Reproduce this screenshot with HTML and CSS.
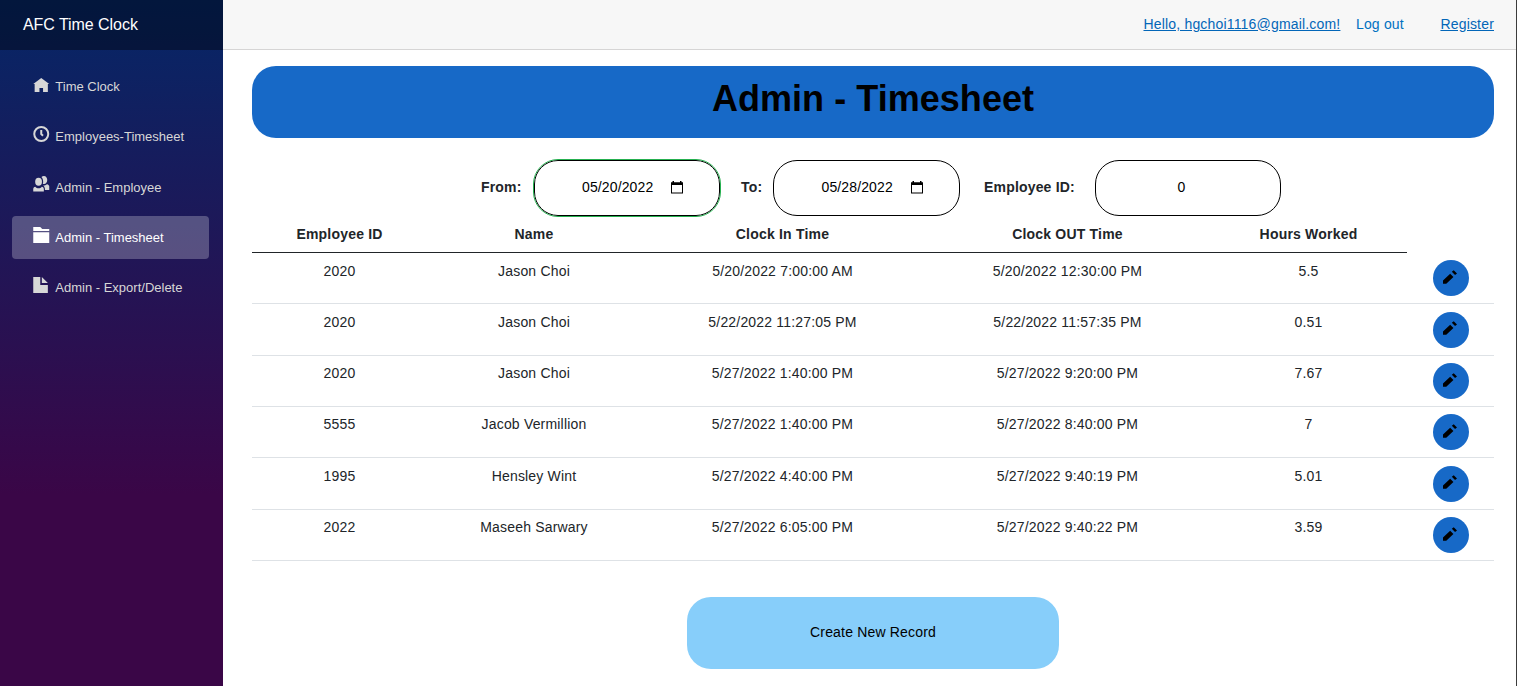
FILE: index.html
```html
<!DOCTYPE html>
<html lang="en">
<head>
<meta charset="utf-8">
<title>AFC Time Clock</title>
<link rel="stylesheet" href="styles.css">
</head>
<body>
<svg class="defs" width="0" height="0">
  <symbol id="pencil" viewBox="0 0 43 42"><path d="M0 32v10h10l22-21-10-10zM27 5l6-5 10 10-6 5z"/></symbol>
  <symbol id="calendar" viewBox="0 0 12 13"><path fill-rule="evenodd" d="M1.500 0h1.500v1.200h6V0h1.500v1.200H12V12.500H0V1.200h1.500zM1 4v7.500h10V4z"/></symbol>
</svg>
<div class="page">
  <aside class="sidebar">
    <div class="brand">AFC Time Clock</div>
    <nav class="menu">
      <a class="item"><svg class="oi home" viewBox="0 0 8 8"><path d="M4 0L0 3h.7v4h2.400V5h1.800v2h2.400V3H8z"/></svg><span>Time Clock</span></a>
      <a class="item"><svg class="oi" viewBox="0 0 8 8"><path fill-rule="evenodd" d="M4 0a4 4 0 1 0 0 8 4 4 0 0 0 0-8zm0 1a3 3 0 1 1 0 6 3 3 0 0 1 0-6zm-.5 1v2.220l.16.130.5.500.34.380.72-.72-.38-.34-.34-.34V2z"/></svg><span>Employees-Timesheet</span></a>
      <a class="item"><svg class="oi people" viewBox="0 0 16 16"><ellipse cx="5.300" cy="5.800" rx="3.400" ry="4"/><path d="M0 15.500V13c0-1.200.8-2 2-2.300 1 1 2 1.500 3.300 1.500s2.400-.5 3.300-1.500c1.200.3 2 1.100 2 2.300v2.500zM8.200 1c.7-.7 1.500-1 2.500-1 2 0 3.300 1.800 3.300 4s-1.300 4.100-3.200 4.100c-.5 0-.9-.1-1.300-.3.300-.6.400-1.300.4-2.100 0-2-.6-3.600-1.700-4.700zM11.700 13.500c0-1.900-.6-3-1.700-4.100 1.500 0 2.700-.3 3.700-1.200 1.500.4 2.300 1.200 2.300 2.400v3.400h-4.300z"/></svg><span>Admin - Employee</span></a>
      <a class="item active"><svg class="oi" viewBox="0 0 8 8"><path d="M0 0v2h8V1H4.500L3.500 0zm0 2.600V8h8V2.600z"/></svg><span>Admin - Timesheet</span></a>
      <a class="item"><svg class="oi" viewBox="0 0 8 8"><path d="M0 0v8h7.300V4H3.500V0zm4.300 0v3h3z"/></svg><span>Admin - Export/Delete</span></a>
    </nav>
  </aside>
  <main class="main">
    <header class="topbar"><a class="link">Hello, hgchoi1116@gmail.com!</a><button class="logout">Log out</button><a class="link">Register</a></header>
    <section class="content">
      <h1 class="title">Admin - Timesheet</h1>
      <div class="filters">
        <label class="from">From:</label><div class="field focus">05/20/2022<svg class="cal"><use href="#calendar"/></svg></div>
        <label class="to">To:</label><div class="field">05/28/2022<svg class="cal"><use href="#calendar"/></svg></div>
        <label class="emp">Employee ID:</label><div class="field number">0</div>
      </div>
      <div class="row head"><span>Employee ID</span><span>Name</span><span>Clock In Time</span><span>Clock OUT Time</span><span>Hours Worked</span></div>
      <div class="rows">
        <div class="row"><span>2020</span><span>Jason Choi</span><span>5/20/2022 7:00:00 AM</span><span>5/20/2022 12:30:00 PM</span><span>5.5</span><button class="edit"><svg><use href="#pencil"/></svg></button></div>
        <div class="row"><span>2020</span><span>Jason Choi</span><span>5/22/2022 11:27:05 PM</span><span>5/22/2022 11:57:35 PM</span><span>0.51</span><button class="edit"><svg><use href="#pencil"/></svg></button></div>
        <div class="row"><span>2020</span><span>Jason Choi</span><span>5/27/2022 1:40:00 PM</span><span>5/27/2022 9:20:00 PM</span><span>7.67</span><button class="edit"><svg><use href="#pencil"/></svg></button></div>
        <div class="row"><span>5555</span><span>Jacob Vermillion</span><span>5/27/2022 1:40:00 PM</span><span>5/27/2022 8:40:00 PM</span><span>7</span><button class="edit"><svg><use href="#pencil"/></svg></button></div>
        <div class="row"><span>1995</span><span>Hensley Wint</span><span>5/27/2022 4:40:00 PM</span><span>5/27/2022 9:40:19 PM</span><span>5.01</span><button class="edit"><svg><use href="#pencil"/></svg></button></div>
        <div class="row"><span>2022</span><span>Maseeh Sarwary</span><span>5/27/2022 6:05:00 PM</span><span>5/27/2022 9:40:22 PM</span><span>3.59</span><button class="edit"><svg><use href="#pencil"/></svg></button></div>
      </div>
      <button class="create">Create New Record</button>
    </section>
  </main>
</div>
</body>
</html>
```
FILE: styles.css
```css
* { box-sizing: border-box; }
body { margin: 0; font: 14px/20px "Liberation Sans", Arial, sans-serif; letter-spacing: .18px; color: #212529; overflow: hidden; }
button { font: inherit; letter-spacing: inherit; border: 0; padding: 0; background: none; }
.defs { position: absolute; }
.page { display: flex; height: 686px; }
.sidebar { width: 223px; background: linear-gradient(180deg, #052767 0%, #3a0647 72%); letter-spacing: 0; }
.brand { height: 50px; padding: 0 23px; background: rgba(0,0,0,.4); color: #fff; font-size: 16px; line-height: 49px; letter-spacing: -.05px; }
.menu { display: flex; flex-direction: column; gap: 7.250px; padding: 15.200px 14px 0 12px; }
.item { display: flex; height: 43px; padding: 0 21px; border-radius: 4px; color: #d7d7d7; font-size: 13px; line-height: 43px; }
.item.active { background: rgba(255,255,255,.25); color: #fff; }
.oi { width: 16.500px; height: 16px; margin: 11px 5.800px 0 0; fill: currentColor; }
.oi.home { margin-top: 13px; }
.oi.people { margin-top: 10.500px; }
.main { flex: 1; border-right: 1px solid #3c3c3c; }
.topbar { display: flex; justify-content: flex-end; align-items: center; height: 50px; padding: 0 22px 2px 0; background: #f7f7f7; border-bottom: 1px solid #d6d5d5; color: #0366b8; }
.link { text-decoration: underline; }
.logout { margin: 0 36.500px 0 15.500px; color: #0071c1; }
.content { display: flex; flex-direction: column; padding: 16px 22px 0 29px; }
.title { height: 72px; margin: 0; border-radius: 24px; background: #1769c7; color: #000; text-align: center; font-size: 36px; line-height: 65px; letter-spacing: .04px; }
.filters { display: flex; align-items: center; height: 56px; margin-top: 22px; padding-left: 229px; font-weight: 700; }
.filters label { padding-bottom: 2px; letter-spacing: .18px; }
.from { width: 53px; }
.to { width: 32px; margin-left: 21px; }
.emp { width: 111px; margin-left: 24px; }
.field { display: flex; align-items: center; width: 187px; height: 56px; padding: 0 0 2px 47.500px; border: 1px solid #000; border-radius: 24px; color: #000; font-weight: 400; letter-spacing: .13px; }
.field.focus { width: 186px; padding-left: 47px; outline: 1px solid #26b050; }
.field.number { width: 186px; justify-content: center; padding: 0 13px 2px 0; }
.cal { width: 12px; height: 13px; margin: 1px 0 0 18px; }
.row { display: grid; grid-template-columns: 175px 214px 283px 287px 195px 88px; flex: 1; padding-top: 7.450px; border-bottom: 1px solid #dee2e6; text-align: center; }
.row.head { flex: none; grid-template-columns: 175px 214px 283px 287px 195px; width: 1155px; height: 37px; padding-top: 8px; font-weight: 700; letter-spacing: .2px; border-color: #212529; }
.rows { display: flex; flex-direction: column; height: 308px; }
.rows .row:first-child span { padding-top: .5px; }
.edit { width: 36px; height: 36px; margin-left: 27px; border-radius: 50%; background: #1769c7; display: grid; place-items: center; }
.edit svg { width: 14px; height: 14px; margin: -3px 2px 0 0; }
.create { align-self: center; width: 372px; height: 72px; margin-top: 36px; padding-bottom: 2px; border-radius: 24px; background: #87cefa; color: #000; }
```
